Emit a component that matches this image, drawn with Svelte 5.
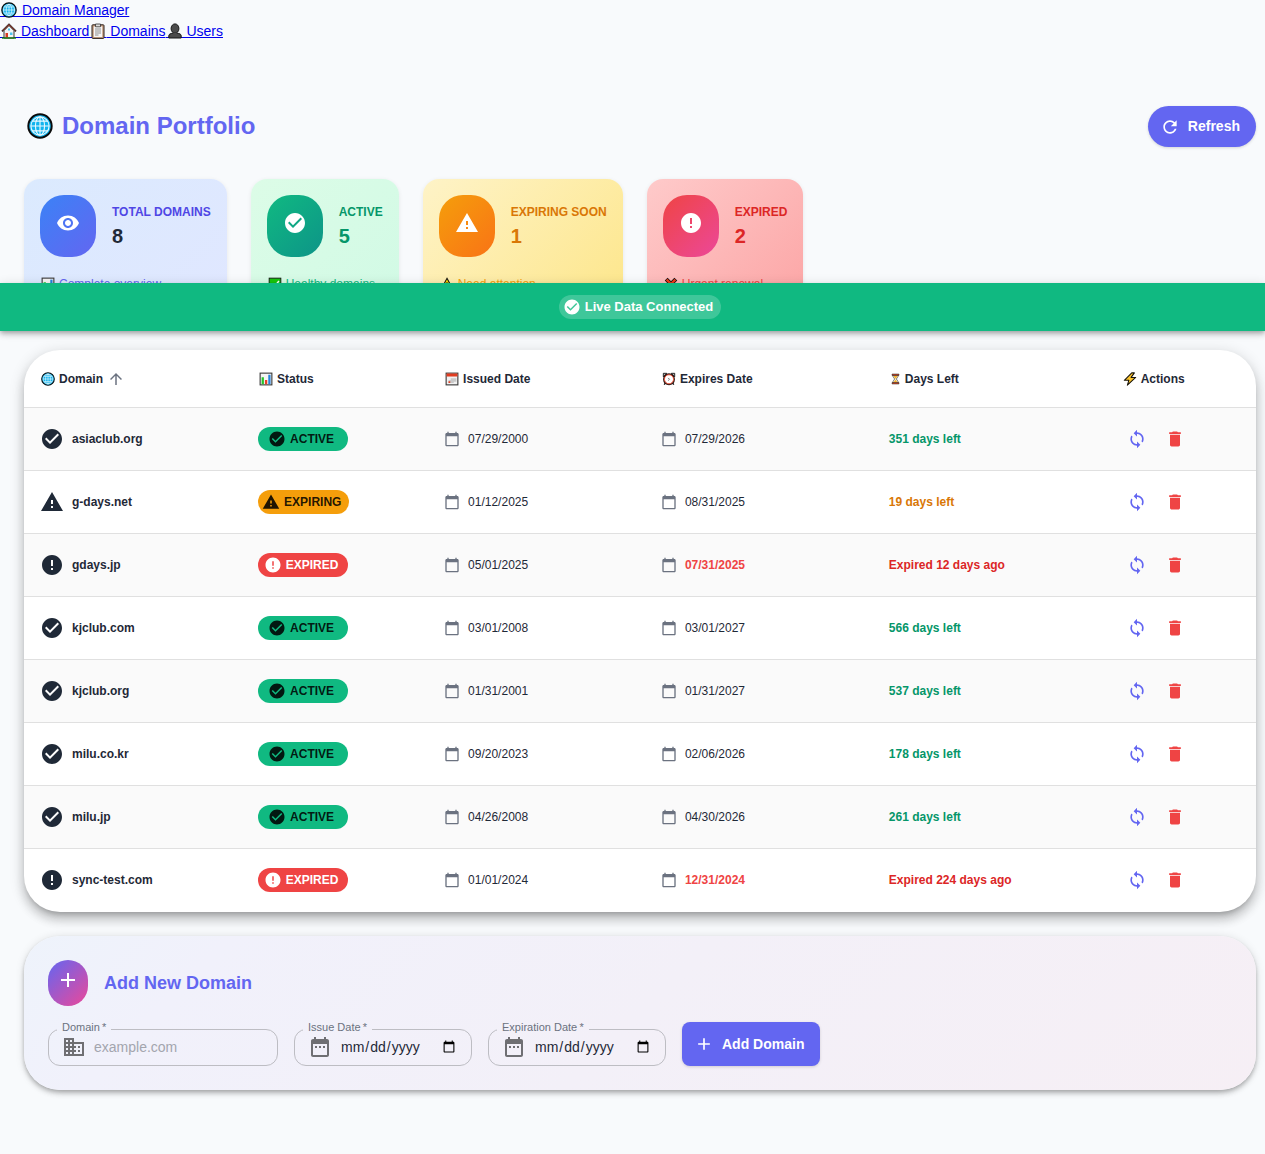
<script>
  const paths = {
    eye: 'M12 4.5C7 4.5 2.73 7.61 1 12c1.73 4.39 6 7.5 11 7.5s9.27-3.11 11-7.5c-1.73-4.39-6-7.5-11-7.5zM12 17c-2.76 0-5-2.24-5-5s2.24-5 5-5 5 2.24 5 5-2.24 5-5 5zm0-8c-1.66 0-3 1.34-3 3s1.34 3 3 3 3-1.34 3-3-1.34-3-3-3z',
    check: 'M12 2C6.48 2 2 6.48 2 12s4.48 10 10 10 10-4.48 10-10S17.52 2 12 2zm-2 15-5-5 1.41-1.41L10 14.17l7.59-7.59L19 8l-9 9z',
    warning: 'M1 21h22L12 2 1 21zm12-3h-2v-2h2v2zm0-4h-2v-4h2v4z',
    error: 'M12 2C6.48 2 2 6.48 2 12s4.48 10 10 10 10-4.48 10-10S17.52 2 12 2zm1 15h-2v-2h2v2zm0-4h-2V7h2v6z',
    refresh: 'M17.65 6.35C16.2 4.9 14.21 4 12 4c-4.42 0-7.99 3.58-7.99 8s3.57 8 7.99 8c3.73 0 6.84-2.55 7.73-6h-2.08c-.82 2.33-3.04 4-5.65 4-3.31 0-6-2.69-6-6s2.69-6 6-6c1.66 0 3.14.69 4.22 1.78L13 11h7V4l-2.35 2.35z',
    up: 'm4 12 1.41 1.41L11 7.83V20h2V7.83l5.58 5.59L20 12l-8-8-8 8z',
    day: 'M20 3h-1V1h-2v2H7V1H5v2H4c-1.1 0-2 .9-2 2v16c0 1.1.9 2 2 2h16c1.1 0 2-.9 2-2V5c0-1.1-.9-2-2-2zm0 18H4V8h16v13z',
    sync: 'M12 4V1L8 5l4 4V6c3.31 0 6 2.69 6 6 0 1.01-.25 1.97-.7 2.8l1.46 1.46C19.54 15.03 20 13.57 20 12c0-4.42-3.58-8-8-8zm0 14c-3.31 0-6-2.69-6-6 0-1.01.25-1.97.7-2.8L5.24 7.74C4.46 8.97 4 10.43 4 12c0 4.42 3.58 8 8 8v3l4-4-4-4v3z',
    trash: 'M6 19c0 1.1.9 2 2 2h8c1.1 0 2-.9 2-2V7H6v12zM19 4h-3.5l-1-1h-5l-1 1H5v2h14V4z',
    plus: 'M19 13h-6v6h-2v-6H5v-2h6V5h2v6h6v2z',
    business: 'M12 7V3H2v18h20V7H12zM6 19H4v-2h2v2zm0-4H4v-2h2v2zm0-4H4V9h2v2zm0-4H4V5h2v2zm4 12H8v-2h2v2zm0-4H8v-2h2v2zm0-4H8V9h2v2zm0-4H8V5h2v2zm10 12h-8v-2h2v-2h-2v-2h2v-2h-2V9h8v10zm-2-8h-2v2h2v-2zm0 4h-2v2h2v-2z',
    range: 'M9 11H7v2h2v-2zm4 0h-2v2h2v-2zm4 0h-2v2h2v-2zm2-7h-1V2h-2v2H8V2H6v2H5c-1.11 0-1.99.9-1.99 2L3 20c0 1.1.89 2 2 2h14c1.1 0 2-.9 2-2V6c0-1.1-.9-2-2-2zm0 16H5V9h14v11z'
  };

  const nav = [
    { emoji: 'house', label: 'Dashboard' },
    { emoji: 'clipboard', label: 'Domains' },
    { emoji: 'user', label: 'Users' }
  ];

  const stats = [
    { kind: 'total', icon: 'eye', label: 'TOTAL DOMAINS', value: 8, emoji: 'chart', note: 'Complete overview' },
    { kind: 'active', icon: 'check', label: 'ACTIVE', value: 5, emoji: 'tick', note: 'Healthy domains' },
    { kind: 'expiring', icon: 'warning', label: 'EXPIRING SOON', value: 1, emoji: 'caution', note: 'Need attention' },
    { kind: 'expired', icon: 'error', label: 'EXPIRED', value: 2, emoji: 'cross', note: 'Urgent renewal' }
  ];

  const columns = [
    { key: 'domain', emoji: 'globe', label: 'Domain', sorted: true },
    { key: 'status', emoji: 'chart', label: 'Status' },
    { key: 'issued', emoji: 'calendar', label: 'Issued Date' },
    { key: 'expires', emoji: 'alarm', label: 'Expires Date' },
    { key: 'left', emoji: 'hourglass', label: 'Days Left' },
    { key: 'actions', emoji: 'bolt', label: 'Actions' }
  ];

  const statusIcon = { active: 'check', expiring: 'warning', expired: 'error' };

  const rows = [
    { name: 'asiaclub.org', status: 'active', issued: '07/29/2000', expires: '07/29/2026', left: '351 days left' },
    { name: 'g-days.net', status: 'expiring', issued: '01/12/2025', expires: '08/31/2025', left: '19 days left' },
    { name: 'gdays.jp', status: 'expired', issued: '05/01/2025', expires: '07/31/2025', left: 'Expired 12 days ago' },
    { name: 'kjclub.com', status: 'active', issued: '03/01/2008', expires: '03/01/2027', left: '566 days left' },
    { name: 'kjclub.org', status: 'active', issued: '01/31/2001', expires: '01/31/2027', left: '537 days left' },
    { name: 'milu.co.kr', status: 'active', issued: '09/20/2023', expires: '02/06/2026', left: '178 days left' },
    { name: 'milu.jp', status: 'active', issued: '04/26/2008', expires: '04/30/2026', left: '261 days left' },
    { name: 'sync-test.com', status: 'expired', issued: '01/01/2024', expires: '12/31/2024', left: 'Expired 224 days ago' }
  ];
</script>

{#snippet icon(name, size)}
  <svg class="icon" viewBox="0 0 24 24" width={size} height={size} aria-hidden="true"><path d={paths[name]} /></svg>
{/snippet}

{#snippet emoji(name)}
  <svg class="emoji {name}" viewBox="0 0 16 16" aria-hidden="true">
    {#if name === 'globe'}
      <circle cx="8" cy="8" r="7.2" fill="#12b4ee" stroke="#0b0b0b" stroke-width="1.2" />
      <g fill="none" stroke="#e9f8fe" stroke-width=".7">
        <ellipse cx="8" cy="8" rx="2.8" ry="5.6" />
        <circle cx="8" cy="8" r="5.6" />
        <path d="M8 2.400v11.200M2.400 8h11.200M3.500 5h9M3.500 11h9" />
      </g>
    {:else if name === 'house'}
      <path d="M3 7.500 8 2.500l5 5V15H3z" fill="#f3f3f3" stroke="#222" stroke-width=".9" />
      <path d="M1 8.400 8 1.400l7 7" fill="none" stroke="#222" stroke-width="1.800" />
      <path d="M1.500 8 8 1.600 14.500 8" fill="none" stroke="#c84a35" stroke-width=".9" />
      <path d="M4.500 10h2.500v4.500H4.500z" fill="#d83b20" />
      <path d="M9 9.500h2.500V12H9zM7 5.500h2v2H7z" fill="#4cc5ee" />
      <path d="M1 15h14" stroke="#14780f" stroke-width="1.400" />
    {:else if name === 'clipboard'}
      <rect x="2" y="1.800" width="12" height="13.600" rx=".8" fill="#c9a184" stroke="#2b211c" />
      <path d="M3.800 3.500h8.400V14H3.800z" fill="#f5f5f5" />
      <path d="M5.500 1h5v2.800h-5z" fill="#ddd" stroke="#333" stroke-width=".8" />
      <path d="M5 6h6M5 8h6M5 10h6M5 12h3.500" stroke="#777" stroke-width=".8" />
    {:else if name === 'user'}
      <path d="M1.800 15v-2.200c0-1.600 1.500-2.300 4.200-2.600h4c2.700.3 4.200 1 4.200 2.600V15z" fill="#4b4b4b" stroke="#151515" />
      <ellipse cx="8" cy="5.600" rx="3.900" ry="4.700" fill="#4b4b4b" stroke="#151515" />
      <path d="M6.200 10v1.200c1 .9 2.600.9 3.600 0V10" fill="#4b4b4b" />
    {:else if name === 'chart'}
      <rect x="1.300" y="1.300" width="13.400" height="13.400" fill="#f4f4f4" stroke="#3d3d3d" stroke-width="1.300" />
      <path d="M3 6h2.600v8H3z" fill="#25c52a" />
      <path d="M6.800 9h2.600v5H6.800z" fill="#e8412a" />
      <path d="M10.600 3h2.600v11h-2.600z" fill="#2583dc" />
    {:else if name === 'tick'}
      <rect x="1.300" y="1.300" width="13.400" height="13.400" fill="#16c60c" stroke="#111" />
      <path d="m4 8 3 3.200L12.500 4.500" fill="none" stroke="#fff" stroke-width="1.600" />
    {:else if name === 'caution'}
      <path d="M8 1.500 15 14.500H1z" fill="#fce100" stroke="#111" stroke-width="1.200" />
      <path d="M8 6v4M8 11.500V13" stroke="#111" stroke-width="1.400" />
    {:else if name === 'cross'}
      <path d="m2.500 2.500 11 11m0-11-11 11" stroke="#111" stroke-width="4.600" />
      <path d="m3 3 10 10m0-10L3 13" stroke="#f03a17" stroke-width="2.600" />
    {:else if name === 'calendar'}
      <rect x="1.300" y="1.300" width="13.400" height="13.400" fill="#f1f1f1" stroke="#3d3d3d" stroke-width="1.300" />
      <path d="M1.800 1.800h12.400v3.400H1.800z" fill="#e23c20" />
      <path d="M6.500 7H13v4h-3v1.500H4V9h2.500z" fill="#c9c9c9" />
      <path d="M4 10.500h2v2H4z" fill="#e23c20" />
    {:else if name === 'alarm'}
      <path d="m4 12.500-1.500 2M12 12.500l1.500 2" stroke="#111" stroke-width="1.600" />
      <path d="M1.500 5.500v-4h4zM14.500 5.500v-4h-4z" fill="#b9b9b9" stroke="#111" />
      <circle cx="8" cy="8.300" r="5.900" fill="#fff" stroke="#2a1714" stroke-width="1.800" />
      <circle cx="8" cy="8.300" r="5.200" fill="#fff" stroke="#e5482f" stroke-width="1.100" />
      <path d="m7 6.800 1.600 1.600L7 9.800" fill="none" stroke="#444" stroke-width=".8" />
    {:else if name === 'hourglass'}
      <path d="M4 2.500h8c0 3-2.500 4-2.500 5.500S12 10.500 12 13.500H4C4 10.500 6.500 9.500 6.500 8S4 5.500 4 2.500z" fill="#f5efd9" stroke="#222" stroke-width=".9" />
      <path d="M5 3.500h6L8 7.500zM5 13l3-4 3 4z" fill="#f7b32b" />
      <path d="M3 .8h10v2H3zM3 13.200h10v2H3z" fill="#dc4a2c" stroke="#222" stroke-width=".8" />
    {:else if name === 'bolt'}
      <path d="M10 1 1.500 9.500h5.200L5 15l9.500-8.800H9.300L13 1z" fill="#fcc42c" stroke="#17130a" stroke-width="1.200" stroke-linejoin="round" />
    {/if}
  </svg>
{/snippet}

{#snippet dateField(id, label)}
  <fieldset class="field">
    <legend><label for={id}>{label}&thinsp;*</label></legend>
    <div class="control">
      {@render icon('range', 24)}
      <input {id} type="date" required />
    </div>
  </fieldset>
{/snippet}

<header class="site">
  <a class="brand" href="#home">{@render emoji('globe')} Domain Manager</a>
  <nav>
    {#each nav as item}<a href="#{item.label}">{@render emoji(item.emoji)} {item.label}</a>{/each}
  </nav>
</header>

<section class="overview">
  <div class="title-row">
    <h1>{@render emoji('globe')}Domain Portfolio</h1>
    <button class="primary pill" type="button">{@render icon('refresh', 20)}Refresh</button>
  </div>

  <div class="stats">
    {#each stats as s}
      <article class="stat {s.kind}">
        <div class="stat-main">
          <div class="stat-icon">{@render icon(s.icon, 24)}</div>
          <div class="stat-text">
            <div class="stat-label">{s.label}</div>
            <div class="stat-value">{s.value}</div>
          </div>
        </div>
        <div class="note">{@render emoji(s.emoji)}{s.note}</div>
      </article>
    {/each}
  </div>
</section>

<div class="live" role="status">
  <span class="live-chip">{@render icon('check', 18)}Live Data Connected</span>
</div>

<main>
  <div class="panel table-panel">
    <table>
      <thead>
        <tr>
          {#each columns as c}
            <th class={c.key} scope="col" aria-sort={c.sorted ? 'ascending' : undefined}>
              <div class="head">
                {@render emoji(c.emoji)}{c.label}
                {#if c.sorted}
                  <button class="sort" type="button" aria-label="Sort by domain">{@render icon('up', 18)}</button>
                {/if}
              </div>
            </th>
          {/each}
        </tr>
      </thead>
      <tbody>
        {#each rows as r}
          <tr>
            <td><div class="cell name">{@render icon(statusIcon[r.status], 24)}{r.name}</div></td>
            <td><span class="chip {r.status}">{@render icon(statusIcon[r.status], 18)}{r.status.toUpperCase()}</span></td>
            <td><div class="cell date">{@render icon('day', 16)}{r.issued}</div></td>
            <td><div class="cell date">{@render icon('day', 16)}<span class:late={r.status === 'expired'}>{r.expires}</span></div></td>
            <td class="left {r.status}">{r.left}</td>
            <td>
              <div class="cell actions">
                <button class="sync" type="button" aria-label="Sync {r.name}">{@render icon('sync', 20)}</button>
                <button class="delete" type="button" aria-label="Delete {r.name}">{@render icon('trash', 20)}</button>
              </div>
            </td>
          </tr>
        {/each}
      </tbody>
    </table>
  </div>

  <form class="panel add">
    <div class="add-head">
      <div class="add-icon">{@render icon('plus', 24)}</div>
      <h2>Add New Domain</h2>
    </div>
    <div class="fields">
      <fieldset class="field wide">
        <legend><label for="domain">Domain&thinsp;*</label></legend>
        <div class="control">
          {@render icon('business', 24)}
          <input id="domain" type="text" placeholder="example.com" required />
        </div>
      </fieldset>
      {@render dateField('issue', 'Issue Date')}
      {@render dateField('expiration', 'Expiration Date')}
      <button class="primary submit" type="submit">{@render icon('plus', 20)}Add Domain</button>
    </div>
  </form>
</main>

<style>
  :global(body) {
    background: #f8fafc;
    color: #1f2937;
    font-family: 'Liberation Sans', Arial, sans-serif;
    font-size: 14px;
    line-height: 21px;
  }

  :global(#app) {
    padding-bottom: 64px;
  }

  button,
  input {
    font: inherit;
    color: inherit;
    border: 0;
    margin: 0;
    padding: 0;
    background: none;
  }

  button {
    cursor: pointer;
  }

  h1,
  h2 {
    margin: 0;
    color: #6366f1;
  }

  .icon {
    display: block;
    flex: none;
    fill: currentColor;
  }

  .emoji {
    flex: none;
    width: 14px;
    height: 14px;
  }

  .site a {
    color: #0000ee;
  }

  .site .emoji {
    width: 16px;
    height: 16px;
    padding-left: 1px;
    vertical-align: -3px;
    background: linear-gradient(#0000ee, #0000ee) 0 14px / 100% 1px no-repeat;
  }

  .site .brand .emoji {
    padding-right: 1px;
  }

  .brand,
  .site nav {
    display: block;
    height: 21px;
  }

  .overview {
    padding: 64px 9px 0 24px;
  }

  .title-row {
    display: flex;
    align-items: center;
    justify-content: space-between;
    margin-bottom: 32px;
  }

  h1 {
    display: flex;
    align-items: center;
    gap: 9px;
    padding-bottom: 2px;
    font-size: 24px;
    line-height: 30px;
  }

  h1 .emoji {
    width: 26px;
    height: 26px;
    padding-left: 3px;
  }

  .primary {
    display: flex;
    align-items: center;
    gap: 8px;
    padding: 8px 16px 8px 12px;
    background: #6366f1;
    color: #fff;
    font-weight: 700;
    line-height: 25px;
    box-shadow: 0 1px 3px rgba(0, 0, 0, 0.15);
  }

  .pill {
    border-radius: 24px;
  }

  .stats {
    display: flex;
    gap: 24px;
  }

  .stat {
    padding: 16px;
    border-radius: 16px;
    font-size: 12px;
    line-height: 18px;
    box-shadow: 0 1px 4px rgba(0, 0, 0, 0.08);
  }

  .stat-main {
    display: flex;
    align-items: center;
    gap: 16px;
  }

  .stat-icon {
    padding: 16px 16px 22px;
    border-radius: 24px;
    color: #fff;
  }

  .stat-text {
    padding-top: 2px;
    font-weight: 700;
  }

  .stat-value {
    font-size: 20px;
    line-height: 30px;
  }

  .note {
    display: flex;
    align-items: center;
    gap: 4px;
    padding: 0 1px;
    margin-top: 18px;
  }

  .stat.total { background: linear-gradient(135deg, #dbeafe, #e0e7ff); }
  .stat.active { background: linear-gradient(135deg, #dcfce7, #d1fae5); }
  .stat.expiring { background: linear-gradient(135deg, #fef3c7, #fde68a); }
  .stat.expired { background: linear-gradient(135deg, #fecaca, #fca5a5); }

  .total .stat-icon { background: linear-gradient(135deg, #3b82f6, #6366f1); }
  .active .stat-icon { background: linear-gradient(135deg, #10b981, #0d9488); }
  .expiring .stat-icon { background: linear-gradient(135deg, #f59e0b, #f97316); }
  .expired .stat-icon { background: linear-gradient(135deg, #ef4444, #ec4899); }

  .total .stat-label { color: #4f46e5; }
  .stat.active { color: #059669; }
  .stat.expiring { color: #d97706; }
  .stat.expired { color: #dc2626; }

  .total .note { color: #6366f1; }
  .active .note { color: #10b981; }
  .expiring .note { color: #f59e0b; }
  .expired .note { color: #ef4444; }

  .live {
    position: relative;
    z-index: 1;
    display: flex;
    justify-content: center;
    padding: 12px 9px 12px 24px;
    margin-top: -26px;
    background: #10b981;
    box-shadow: 0 2px 4px -1px rgba(0, 0, 0, 0.2), 0 4px 5px rgba(0, 0, 0, 0.14), 0 1px 10px rgba(0, 0, 0, 0.12);
  }

  .live-chip {
    display: flex;
    align-items: center;
    gap: 4px;
    padding: 0 8px 0 4px;
    border-radius: 12px;
    background: rgba(255, 255, 255, 0.2);
    color: #fff;
    font-size: 13px;
    font-weight: 700;
    line-height: 24px;
  }

  main {
    display: flex;
    flex-direction: column;
    gap: 24px;
    padding: 19px 9px 0 24px;
  }

  .panel {
    border-radius: 36px;
  }

  .table-panel {
    overflow: hidden;
    background: #fff;
    box-shadow: 0 5px 5px -3px rgba(0, 0, 0, 0.2), 0 8px 10px 1px rgba(0, 0, 0, 0.14), 0 3px 14px 2px rgba(0, 0, 0, 0.12);
  }

  table {
    width: 100%;
    table-layout: fixed;
    border-collapse: separate;
    border-spacing: 0;
    font-size: 12px;
    line-height: 18px;
  }

  th,
  td {
    box-sizing: border-box;
    height: 63px;
    padding: 0 16px;
    text-align: left;
    border-bottom: 1px solid #e0e0e0;
  }

  th {
    height: 58px;
  }

  th.domain { width: 17.7%; }
  th.status { width: 15.1%; }
  th.issued { width: 17.6%; }
  th.expires { width: 18.5%; }
  th.left { width: 18.9%; }

  tbody tr:nth-child(odd) {
    background: #fafafa;
  }

  tbody tr:last-child td {
    border-bottom-color: transparent;
  }

  .head,
  .cell {
    display: flex;
    align-items: center;
  }

  .head {
    gap: 4px;
    padding-left: 1px;
  }

  .head .hourglass {
    width: 11px;
  }

  .sort {
    color: #6b7280;
  }

  .cell {
    gap: 8px;
  }

  .name {
    font-weight: 700;
  }

  .date .icon {
    color: #6b7280;
  }

  .late {
    color: #ef4444;
    font-weight: 700;
  }

  .chip {
    display: inline-flex;
    box-sizing: border-box;
    align-items: center;
    justify-content: center;
    gap: 4px;
    min-width: 90px;
    padding: 0 8px 0 4px;
    border-radius: 12px;
    color: rgba(0, 0, 0, 0.87);
    font-weight: 700;
    line-height: 24px;
    vertical-align: middle;
  }

  .chip.active { background: #10b981; }
  .chip.expiring { background: #f59e0b; }
  .chip.expired { background: #ef4444; color: #fff; }

  td.left {
    font-weight: 700;
  }

  td.left.active { color: #059669; }
  td.left.expiring { color: #d97706; }
  td.left.expired { color: #dc2626; }

  .actions button {
    padding: 5px;
    border-radius: 50%;
  }

  .sync { color: #6366f1; }
  .delete { color: #ef4444; }

  .add {
    padding: 24px;
    background: linear-gradient(135deg, #eef3fb, #f1f1fb 15%, #f3f0f8 50%, #f6eff5);
    box-shadow: 0 2px 4px -1px rgba(0, 0, 0, 0.2), 0 4px 5px rgba(0, 0, 0, 0.14), 0 1px 10px rgba(0, 0, 0, 0.12);
  }

  .add-head {
    display: flex;
    align-items: center;
    gap: 16px;
    margin-bottom: 15px;
  }

  .add-icon {
    padding: 8px 8px 14px;
    border-radius: 24px;
    background: linear-gradient(135deg, #6366f1, #ec4899);
    color: #fff;
  }

  h2 {
    font-size: 18px;
    line-height: 24px;
  }

  .fields {
    display: flex;
    flex-wrap: wrap;
    align-items: flex-end;
    gap: 16px;
  }

  .field {
    box-sizing: border-box;
    width: 178px;
    min-width: 0;
    margin: 0;
    padding: 0 13px 1px;
    border: 1px solid #bdbdc3;
    border-radius: 12px;
  }

  .field.wide {
    width: 230px;
  }

  legend {
    margin-left: -5px;
    padding: 0 5px 5px;
    color: #6b7280;
    font-size: 11px;
    line-height: 12px;
  }

  legend label {
    display: block;
  }

  .control {
    display: flex;
    align-items: center;
    gap: 8px;
    height: 34px;
    margin-top: -8px;
    color: #1f2937;
  }

  .control .icon {
    color: #6f6f73;
  }

  .control input {
    flex: 1;
    min-width: 0;
    height: 24px;
    outline: none;
  }

  .control input::placeholder {
    color: #a3a5ae;
  }

  .submit {
    height: 44px;
    border-radius: 8px;
  }
</style>
